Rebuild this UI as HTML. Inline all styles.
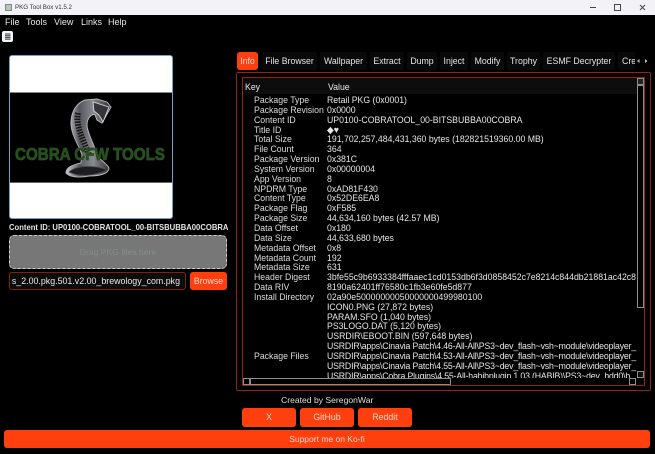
<!DOCTYPE html>
<html><head><meta charset="utf-8">
<style>
html,body{margin:0;padding:0;background:#000}
#r{position:relative;width:655px;height:454px;overflow:hidden;background:#000;font-family:"Liberation Sans",sans-serif;color:#e8e8e8;font-size:8.75px;filter:blur(.3px)}
#r div{position:absolute;white-space:nowrap}
.tab{top:52px;height:18px;line-height:18px;background:#090909;text-align:center;border-radius:2px;color:#e6e6e6}
.btn{background:#ff3f0d;color:#f5d8cc;text-align:center;border-radius:3px}
.col{line-height:9.85px;font-size:9.4px;transform:scaleX(.93);transform-origin:0 0}
.sb{border:1px solid #8c8c8c;box-sizing:border-box}
.n{letter-spacing:-.17px}
</style></head><body>
<div id="r">
<div style="left:0;top:0;width:655px;height:15px;background:#f3f3f7"></div>
<div style="left:5px;top:4px;width:7px;height:7px;background:#b8c4bc;border:1px solid #7f8a85;box-sizing:border-box"></div>
<div style="left:15px;top:2px;font-size:6.2px;line-height:11px;color:#333">PKG Tool Box v1.5.2</div>
<svg style="position:absolute;left:585px;top:2px" width="65" height="11"><path d="M5 5.5h6" stroke="#444" fill="none"/><rect x="29.5" y="2.5" width="6" height="6" fill="none" stroke="#444"/><path d="M55 3l5 5M60 3l-5 5" stroke="#444" fill="none"/></svg>

<div style="left:5px;top:16px;line-height:12px;font-size:9px">File</div>
<div style="left:26px;top:16px;line-height:12px;font-size:9px">Tools</div>
<div style="left:54px;top:16px;line-height:12px;font-size:9px">View</div>
<div style="left:81px;top:16px;line-height:12px;font-size:9px">Links</div>
<div style="left:108px;top:16px;line-height:12px;font-size:9px">Help</div>
<div style="left:2px;top:31px;width:11px;height:11px;background:#f2f4f8;border-radius:2px"></div>
<svg style="position:absolute;left:2px;top:31px" width="11" height="11"><path d="M3 3h5.5M3 4.7h5.5M3 6.4h5.5M3 8.1h5.5" stroke="#333" stroke-width="1"/></svg>

<div style="left:9px;top:55px;width:164px;height:164px;background:#fff;border-radius:3px;border:1px solid #6ea4c8;box-sizing:border-box;overflow:hidden">
<div style="left:0;top:36px;width:162px;height:91px;background:#000;border-top:1px solid #888;border-bottom:1px solid #666;box-sizing:border-box"></div>
</div>
<svg style="position:absolute;left:9px;top:55px" width="164" height="164" viewBox="0 0 164 164">
<defs><linearGradient id="g" x1="0" x2="1" y1="0" y2="0"><stop offset="0" stop-color="#cfcfd4"/><stop offset=".3" stop-color="#55555c"/><stop offset=".6" stop-color="#8a8a92"/><stop offset="1" stop-color="#2a2a2e"/></linearGradient></defs>
<path d="M76 45C68 48 62 56 62 68C62 80 70 90 73 100L72 108C64 110 57 112 57 118C60 122 70 123 80 121C90 121 100 119 100 113C97 108 90 104 88 100C85 88 78 78 78 70C78 62 84 58 86 60L88 65L93 68L102 52L98 47L88 44Z" fill="url(#g)" stroke="#b5b5b5" stroke-width="1"/>
<path d="M69 58C66 70 74 84 80 100" fill="none" stroke="#17171a" stroke-width="6" stroke-dasharray="1.600 1.200"/>
<path d="M84 47L100 52L94 67L90 60L85 56Z" fill="#34343a" stroke="#d8d8d8" stroke-width=".9"/>
<path d="M60 117C68 110 86 110 98 115C86 121 70 122 60 117Z" fill="#1d1d1f" stroke="#444" stroke-width=".8"/>
<text x="6" y="105" font-family="'Liberation Sans',sans-serif" font-weight="700" font-size="17.500" fill="#27501f" stroke="#27501f" stroke-width=".8" textLength="150" lengthAdjust="spacingAndGlyphs">COBRA CFW TOOLS</text>
</svg>

<div style="left:9px;top:222px;font-size:8.4px;font-weight:700;line-height:10px;color:#e4e4e4;transform:scaleX(.915);transform-origin:0 0">Content ID: UP0100-COBRATOOL_00-BITSBUBBA00COBRA</div>
<div style="left:9px;top:235px;width:218px;height:34px;background:#777;border:1px dashed #c9c9c9;box-sizing:border-box;border-radius:5px;text-align:center;line-height:32px;color:#858c8c;font-size:8.6px">Drag PKG files here</div>
<div style="left:9px;top:272px;width:177px;height:18px;background:#0c0c0c;border:1px solid #7a2410;box-sizing:border-box;border-radius:3px;overflow:hidden">
<div style="right:5px;top:0;line-height:16px;font-size:8.85px;color:#e8e8e8">PKG_Tools_2.00.pkg.501.v2.00_brewology_com.pkg</div>
<div style="left:0;top:0;width:2px;height:16px;background:#0c0c0c"></div></div>
<div class="btn" style="left:190px;top:272px;width:37px;height:18px;line-height:18px">Browse</div>

<div class="tab btn" style="left:237px;width:21px;color:#f5d8cc;background:#ff3f0d">Info</div>
<div class="tab" style="left:262px;width:55px">File Browser</div>
<div class="tab" style="left:320px;width:47px">Wallpaper</div>
<div class="tab" style="left:370px;width:34px">Extract</div>
<div class="tab" style="left:407px;width:30px">Dump</div>
<div class="tab" style="left:440px;width:28px">Inject</div>
<div class="tab" style="left:471px;width:33px">Modify</div>
<div class="tab" style="left:507px;width:33px">Trophy</div>
<div class="tab" style="left:543px;width:72px">ESMF Decrypter</div>
<div class="tab" style="left:618px;width:17px;text-align:left;overflow:hidden"><span style="margin-left:4px">Cre</span></div>
<svg style="position:absolute;left:634px;top:56px" width="16" height="10"><path d="M5.500 3L3 5 5.500 7zM11 3L13.500 5 11 7z" fill="#bbb"/></svg>

<div style="left:236px;top:72px;width:415px;height:319px;border:1px solid #8f2610;box-sizing:border-box;border-radius:2px"></div>
<div style="left:242px;top:77px;width:403px;height:309px;border:1px solid #8f2610;box-sizing:border-box;overflow:hidden;background:#000"></div>
<div style="left:243px;top:78px;width:394px;height:16px;background:#0d0d0d"></div>
<div class="col" style="left:245px;top:81px;line-height:11px">Key</div>
<div class="col" style="left:328px;top:81px;line-height:11px">Value</div>

<div style="left:243px;top:95px;width:394px;height:283px;overflow:hidden">
<div class="col" style="left:11px;top:0;color:#dcdcdc">Package Type<br>Package Revision<br>Content ID<br>Title ID<br>Total Size<br>File Count<br>Package Version<br>System Version<br>App Version<br>NPDRM Type<br>Content Type<br>Package Flag<br>Package Size<br>Data Offset<br>Data Size<br>Metadata Offset<br>Metadata Count<br>Metadata Size<br>Header Digest<br>Data RIV<br>Install Directory<br><br><br><br><br><br>Package Files</div>
<div class="col" style="left:84px;top:0;color:#e6e6e6">Retail PKG (0x0001)<br>0x0000<br>UP0100-COBRATOOL_00-BITSBUBBA00COBRA<br>◆♥<br>191,702,257,484,431,360 bytes (182821519360.00 MB)<br>364<br>0x381C<br>0x00000004<br>8<br>0xAD81F430<br>0x52DE6EA8<br>0xF585<br>44,634,160 bytes (42.57 MB)<br>0x180<br>44,633,680 bytes<br>0x8<br>192<br>631<br>3bfe55c9b6933384fffaaec1cd0153db6f3d0858452c7e8214c844db21881ac42c8<br>8190a62401ff76580c1fb3e60fe5d877<br>02a90e50000000050000000499980100<br>ICON0.PNG (27,872 bytes)<br>PARAM.SFO (1,040 bytes)<br>PS3LOGO.DAT (5,120 bytes)<br>USRDIR\EBOOT.BIN (597,648 bytes)<br><span class="n">USRDIR\apps\Cinavia Patch\4.46-All-All\PS3~dev_flash~vsh~module\videoplayer_</span><br><span class="n">USRDIR\apps\Cinavia Patch\4.53-All-All\PS3~dev_flash~vsh~module\videoplayer_</span><br><span class="n">USRDIR\apps\Cinavia Patch\4.55-All-All\PS3~dev_flash~vsh~module\videoplayer_</span><br><span class="n">USRDIR\apps\Cobra Plugins\4.55-All-habibplugin 1.03 (HABIB)\PS3~dev_hdd0\b</span></div>
</div>

<div style="left:637px;top:78px;width:7px;height:300px;background:#000"></div>
<div class="sb" style="left:637px;top:78px;width:7px;height:7px;background:#222"></div>
<div class="sb" style="left:637px;top:85px;width:7px;height:223px"></div>
<div class="sb" style="left:637px;top:371px;width:7px;height:7px;background:#111"></div>
<div style="left:243px;top:378px;width:401px;height:7px;background:#000"></div>
<div class="sb" style="left:243px;top:378px;width:7px;height:7px"></div>
<div class="sb" style="left:250px;top:378px;width:201px;height:7px"></div>
<div class="sb" style="left:629px;top:378px;width:7px;height:7px"></div>

<div style="left:281px;top:395px;line-height:11px;color:#dedede;font-size:8.6px">Created by SeregonWar</div>
<div class="btn" style="left:242px;top:408px;width:54px;height:19px;line-height:19px">X</div>
<div class="btn" style="left:300px;top:408px;width:54px;height:19px;line-height:19px">GitHub</div>
<div class="btn" style="left:358px;top:408px;width:54px;height:19px;line-height:19px">Reddit</div>
<div class="btn" style="left:4px;top:430px;width:646px;height:18px;line-height:18px;font-size:8.5px">Support me on Ko-fi</div>
</div>
</body></html>
